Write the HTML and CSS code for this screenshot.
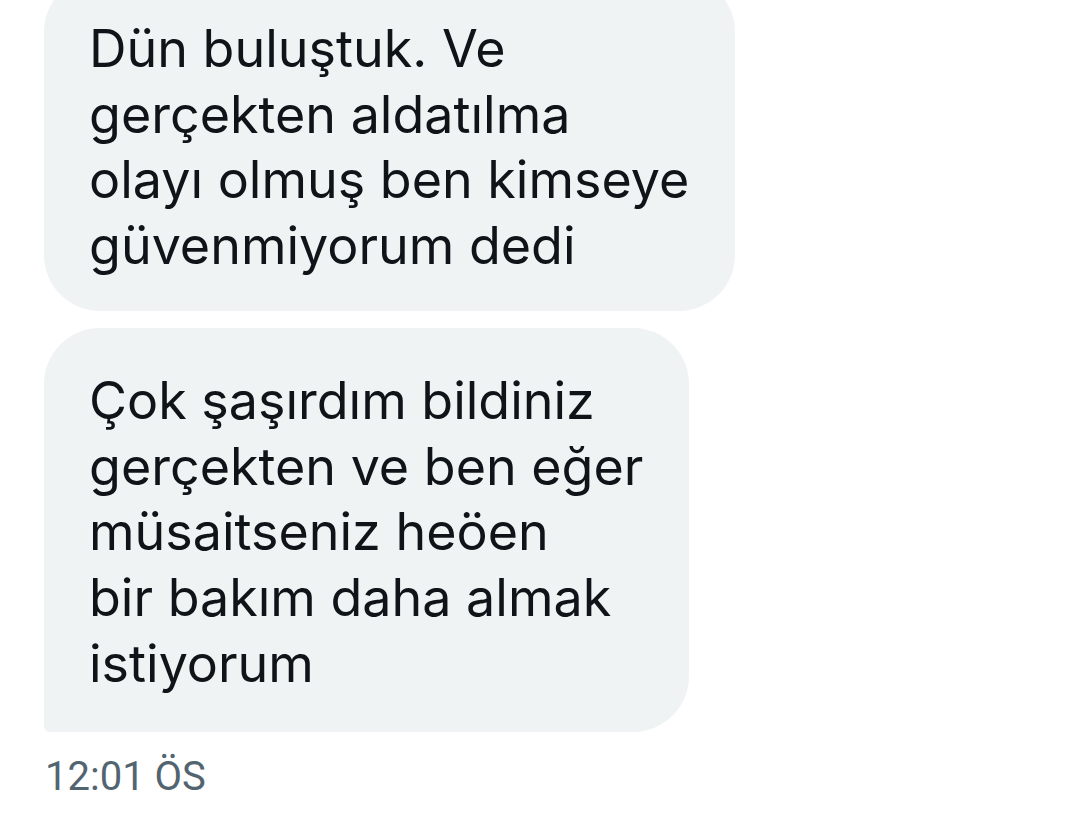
FILE: index.html
```html
<!DOCTYPE html>
<html lang="tr">
  <head>
    <meta charset="UTF-8" />
    <meta name="viewport" content="width=device-width, initial-scale=1.0" />
    <title>Mesajlar</title>
    <link rel="stylesheet" href="styles.css">
  </head>
  <body>
    <div class="thread">
      <div class="bubble">
        Dün buluştuk. Ve<br />
        gerçekten aldatılma<br />
        olayı olmuş ben kimseye<br />
        güvenmiyorum dedi
      </div>

      <div class="bubble last">
        Çok şaşırdım bildiniz<br />
        gerçekten ve ben eğer<br />
        müsaitseniz heöen<br />
        bir bakım daha almak<br />
        istiyorum
      </div>

      <div class="time">12:01 ÖS</div>
    </div>
  </body>
</html>
```

FILE: styles.css
```css
/* Page */
body {
  margin: 0;
  background: #ffffff;
  font-family: "Inter", "Noto Sans", sans-serif;
  color: #0f1419;
  overflow: hidden;
}

/* --- Message thread --- */
.thread {
  display: flex;
  flex-direction: column;
  align-items: flex-start;
  gap: 17px;
  padding-left: 44px;
  margin-top: -24px;
}

.bubble {
  background: #eff3f4;
  border-radius: 56px;
  padding: 40px 46px 32px 45px;
  font-size: 52px;
  line-height: 65.7px;
  letter-spacing: 0;
  white-space: nowrap;
}

/* last message in a group gets the flat corner */
.bubble.last {
  border-bottom-left-radius: 6px;
  padding-bottom: 36px;
}

.time {
  margin-top: 6px;
  margin-left: 1px;
  font-family: "Roboto", "Liberation Sans", sans-serif;
  font-size: 40px;
  line-height: 44px;
  color: #536471;
}
```
